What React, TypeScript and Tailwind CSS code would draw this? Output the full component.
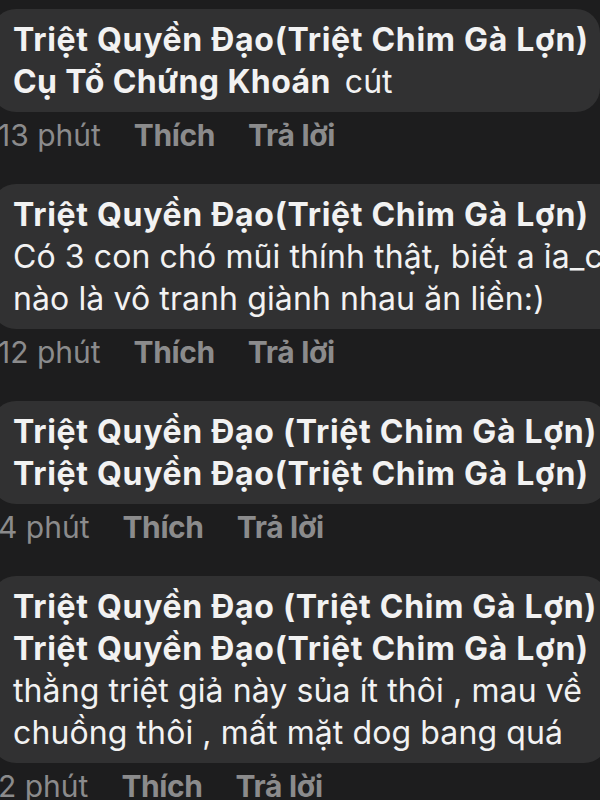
import React from 'react'

interface CommentProps {
  names: string[]
  inlineName?: string
  inlineText?: string
  body?: string[]
  time: string
}

function Comment({ names, inlineName, inlineText, body = [], time }: CommentProps) {
  return (
    <div className="flex flex-col items-start">
      <div className="-ml-[8px] w-fit rounded-[24px] bg-[#313132] pl-[21px] pr-[11px] pt-[10px] pb-[9px] text-[32px] leading-[42px] text-[#f2f2f2] whitespace-nowrap">
        {names.map((n, i) => (
          <div key={i} className="font-bold tracking-[0.7px]">{n}</div>
        ))}
        {inlineName && (
          <div>
            <span className="font-bold tracking-[0.4px]">{inlineName}</span>
            <span className="ml-[14px] font-normal">{inlineText}</span>
          </div>
        )}
        {body.map((b, i) => (
          <div key={i} className="font-normal tracking-[0.1px]">{b}</div>
        ))}
      </div>
      <div className="-ml-[2px] mt-[5px] mb-[31px] flex items-center gap-[33px] text-[30px] leading-[36px] text-[#8b8b8c]">
        <span className="font-normal">{time}</span>
        <span className="font-bold tracking-[-0.4px]">Thích</span>
        <span className="font-bold tracking-[-0.3px]">Trả lời</span>
      </div>
    </div>
  )
}

export default function App() {
  return (
    <div
      className="w-[600px] h-[800px] overflow-hidden bg-[#1d1d1e] pt-[9px]"
      style={{ fontFamily: 'Inter, "Noto Sans", sans-serif' }}
    >
      <Comment
        names={['Triệt Quyền Đạo(Triệt Chim Gà Lợn)']}
        inlineName="Cụ Tổ Chứng Khoán"
        inlineText="cút"
        time="13 phút"
      />
      <Comment
        names={['Triệt Quyền Đạo(Triệt Chim Gà Lợn)']}
        body={['Có 3 con chó mũi thính thật, biết a ỉa_chỗ', 'nào là vô tranh giành nhau ăn liền:)']}
        time="12 phút"
      />
      <Comment
        names={['Triệt Quyền Đạo (Triệt Chim Gà Lợn)', 'Triệt Quyền Đạo(Triệt Chim Gà Lợn)']}
        time="4 phút"
      />
      <Comment
        names={['Triệt Quyền Đạo (Triệt Chim Gà Lợn)', 'Triệt Quyền Đạo(Triệt Chim Gà Lợn)']}
        body={['thằng triệt giả này sủa ít thôi , mau về', 'chuồng thôi , mất mặt dog bang quá']}
        time="2 phút"
      />
    </div>
  )
}
